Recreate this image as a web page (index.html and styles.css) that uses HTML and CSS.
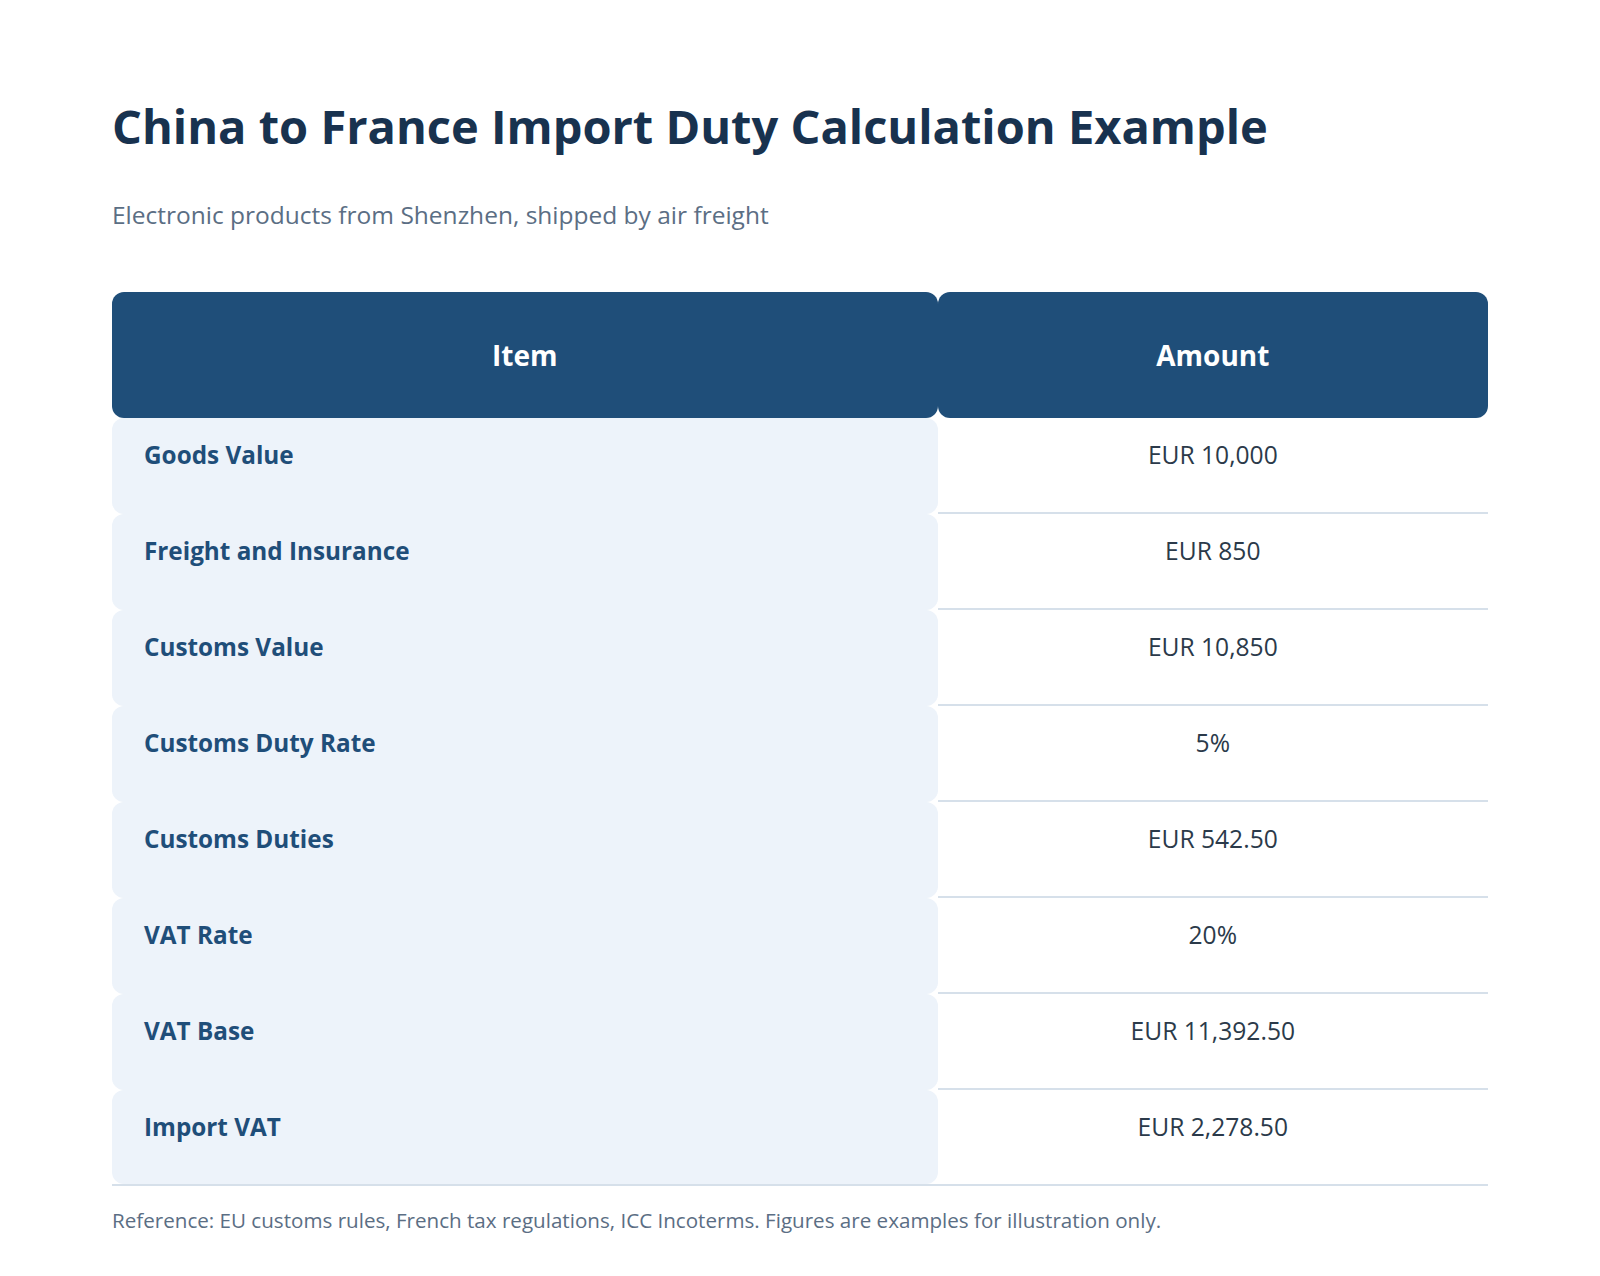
FILE: index.html
```html
<!DOCTYPE html>
<html lang="en">
<head>
<meta charset="utf-8">
<title>China to France Import Duty Calculation Example</title>
<link rel="stylesheet" href="styles.css">
</head>
<body>
<main class="page">
  <h1 class="title">China to France Import Duty Calculation Example</h1>
  <p class="subtitle">Electronic products from Shenzhen, shipped by air freight</p>
  <table class="duty-table">
    <colgroup><col class="col-item"><col class="col-amount"></colgroup>
    <thead>
      <tr><th>Item</th><th>Amount</th></tr>
    </thead>
    <tbody>
      <tr><td class="label">Goods Value</td><td class="amount">EUR 10,000</td></tr>
      <tr><td class="label">Freight and Insurance</td><td class="amount">EUR 850</td></tr>
      <tr><td class="label">Customs Value</td><td class="amount">EUR 10,850</td></tr>
      <tr><td class="label">Customs Duty Rate</td><td class="amount">5%</td></tr>
      <tr><td class="label">Customs Duties</td><td class="amount">EUR 542.50</td></tr>
      <tr><td class="label">VAT Rate</td><td class="amount">20%</td></tr>
      <tr><td class="label">VAT Base</td><td class="amount">EUR 11,392.50</td></tr>
      <tr><td class="label">Import VAT</td><td class="amount">EUR 2,278.50</td></tr>
    </tbody>
  </table>
  <p class="note">Reference: EU customs rules, French tax regulations, ICC Incoterms. Figures are examples for illustration only.</p>
</main>
</body>
</html>
```

FILE: styles.css
```css
html, body {
  margin: 0;
  padding: 0;
  background: #ffffff;
}

body {
  font-family: "Open Sans", "Noto Sans", sans-serif;
  color: #2b3a4a;
}

.page {
  padding: 98px 112px 40px;
}

.title {
  margin: 0;
  font-size: 47px;
  line-height: 1.2;
  font-weight: 700;
  color: #18324f;
}

.subtitle {
  margin: 43px 0 0;
  font-size: 24.5px;
  line-height: 36px;
  color: #5b6e84;
}

.duty-table {
  margin-top: 58.6px;
  width: 100%;
  border-collapse: separate;
  border-spacing: 0;
  table-layout: fixed;
  border-bottom: 2px solid #d6e0ea;
}

.col-item {
  width: 60%;
}

.duty-table th {
  background: #1f4e79;
  color: #ffffff;
  font-size: 28px;
  font-weight: 700;
  line-height: 36px;
  padding: 45px 32px;
  border-radius: 12px;
  text-align: center;
}

.duty-table td {
  line-height: 36px;
  padding: 19px 32px 39px;
  border-bottom: 2px solid #d6e0ea;
  vertical-align: top;
}

.duty-table tbody tr:last-child td {
  border-bottom-width: 0;
  padding-bottom: 39px;
}

.label {
  font-size: 24.3px;
  background: #edf3fa;
  color: #1f4e79;
  font-weight: 700;
  text-align: left;
  border-radius: 12px;
  border-bottom-color: #edf3fa !important;
}

.amount {
  font-size: 24.6px;
  color: #2b3a4a;
  text-align: center;
}

.note {
  margin: 19px 0 0;
  font-size: 20.6px;
  line-height: 30px;
  color: #5b6e84;
}
```
